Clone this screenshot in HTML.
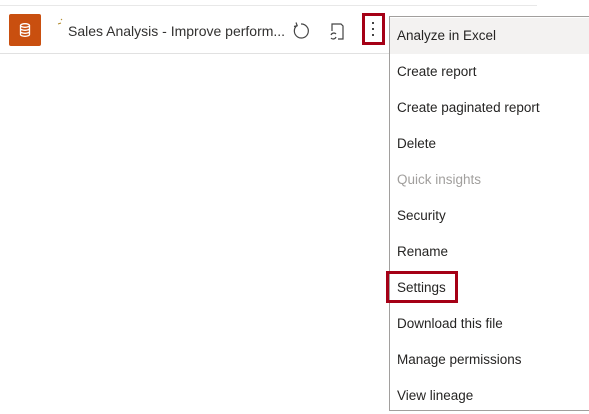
<!DOCTYPE html>
<html><head><style>
body{margin:0;width:589px;height:412px;background:#fff;font-family:"Liberation Sans",sans-serif;position:relative;overflow:hidden;color:#252423}
.a{position:absolute}
.menu{position:absolute;left:389px;top:16px;width:210px;height:395px;border:1px solid #a19f9d;background:#fff;box-sizing:border-box;padding-top:1px}
.it{height:36px;line-height:36px;padding-left:7px;font-size:13.5px;color:#252423}
</style></head><body>
<div class="a" style="left:0;top:5px;width:537px;height:1px;background:#e8e8e8"></div>
<div class="a" style="left:0;top:53px;width:389px;height:1px;background:#e1e1e1"></div>
<div class="a" style="left:9px;top:14px;width:32px;height:32px;background:#c94f0f;border-radius:2px"></div>
<svg class="a" style="left:17px;top:22px" width="16" height="16" viewBox="0 0 16 16" fill="none" stroke="#fff" stroke-width="1.3"><ellipse cx="8" cy="3.5" rx="4.5" ry="1.8"/><path d="M3.5 3.5v9c0 1 2 1.8 4.5 1.8s4.5-.8 4.5-1.8v-9M3.5 6.5c0 1 2 1.8 4.5 1.8s4.5-.8 4.5-1.8M3.5 9.5c0 1 2 1.8 4.5 1.8s4.5-.8 4.5-1.8"/></svg>
<svg class="a" style="left:56px;top:16px" width="10" height="10"><path d="M2 8l3-1M5 3l1 1" stroke="#b08a2a" stroke-width="1"/></svg>
<div class="a" style="left:68px;top:23px;font-size:14px;color:#323130">Sales Analysis - Improve perform...</div>
<svg class="a" style="left:291px;top:21px" width="20" height="20" viewBox="0 0 20 20" fill="none" stroke="#444" stroke-width="1.2"><path d="M6 4.5A7 7 0 1 0 10 3"/><path d="M5 1.5l1.2 3.2-3.2.8"/></svg>
<svg class="a" style="left:327px;top:21px" width="20" height="20" viewBox="0 0 20 20" fill="none" stroke="#444" stroke-width="1.2"><path d="M5 10V3h9l2 2v13h-5"/><path d="M4 14a3 3 0 0 1 5-1M9 16a3 3 0 0 1-5 1"/></svg>
<div class="a" style="left:362px;top:13px;width:23px;height:32px;border:3px solid #a50016;box-sizing:border-box"></div>
<div class="a" style="left:372px;top:22px;width:2px;height:2px;background:#444;box-shadow:0 6px #444,0 12px #444"></div>
<div class="menu">
<div class="it" style="background:#f3f2f1">Analyze in Excel</div>
<div class="it">Create report</div>
<div class="it">Create paginated report</div>
<div class="it">Delete</div>
<div class="it" style="color:#a19f9d">Quick insights</div>
<div class="it">Security</div>
<div class="it">Rename</div>
<div class="it">Settings</div>
<div class="it">Download this file</div>
<div class="it">Manage permissions</div>
<div class="it">View lineage</div>
</div>
<div class="a" style="left:386px;top:271px;width:72px;height:32px;border:3px solid #a50016;box-sizing:border-box"></div>
</body></html>
